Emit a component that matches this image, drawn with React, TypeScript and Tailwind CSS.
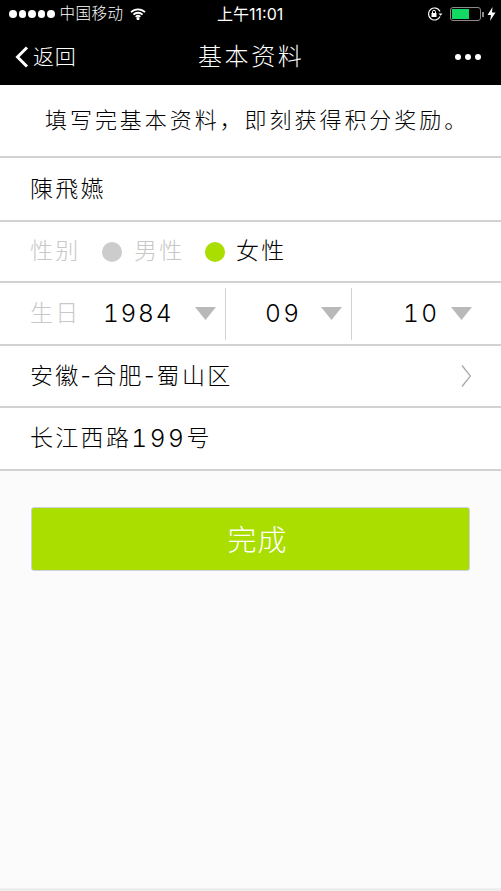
import { ReactNode } from "react";

const font = "font-['Inter','Noto_Sans_CJK_SC',sans-serif]";

function Row({ children, className = "" }: { children: ReactNode; className?: string }) {
  return (
    <div className={`flex items-center whitespace-nowrap border-b-2 border-[#d2d2d2] bg-white pl-[30px] pr-[29px] text-[23px] tracking-[2.3px] ${className}`}>
      {children}
    </div>
  );
}

function Caret() {
  return (
    <svg width="21" height="13" viewBox="0 0 21 13" className="shrink-0">
      <polygon points="0,0 21,0 10.5,13" fill="#b9b9b9" />
    </svg>
  );
}

function Dot({ color }: { color: string }) {
  return <span className={`h-5 w-5 rounded-full ${color}`} />;
}

function StatusBar() {
  return (
    <div className="relative flex h-7 items-center pl-[9px] pr-[5px] text-white">
      <div className="flex gap-[2px]">
        {[0, 1, 2, 3, 4].map((i) => (
          <span key={i} className="h-[7.5px] w-[7.5px] rounded-full bg-white" />
        ))}
      </div>
      <span className="ml-[5px] text-[15.5px] tracking-[0.5px]">中国移动</span>
      <svg width="16" height="12" viewBox="0 0 16 12" className="ml-[6px]" fill="none" stroke="white" strokeWidth="1.8">
        <path d="M1 4.2a10 10 0 0 1 14 0" />
        <path d="M3.4 6.6a6.6 6.6 0 0 1 9.2 0" />
        <path d="M5.7 8.8a3.3 3.3 0 0 1 4.6 0" />
        <circle cx="8" cy="10.6" r="0.7" fill="white" />
      </svg>
      <span className="absolute left-[217px] top-[4px] text-[16px] font-normal leading-5">上午11:01</span>
      <div className="ml-auto flex items-center">
        <svg width="17" height="14" viewBox="0 0 17 14" fill="none" stroke="white" strokeWidth="1.2">
          <path d="M13 9.5A6 6 0 1 1 13 4.5" />
          <path d="M11.5 6.5h4l-2 2.2z" fill="white" stroke="none" />
          <rect x="4.5" y="6" width="5" height="4" fill="white" stroke="none" />
          <path d="M5.5 6V4.8a1.5 1.5 0 0 1 3 0V6" strokeWidth="1" />
        </svg>
        <div className="ml-[6px] flex h-[14px] w-[31px] items-center rounded-[3px] border border-[#8a8a8a] p-[1px]">
          <div className="h-full w-[17px] bg-[#13d862]" />
        </div>
        <span className="ml-[1px] h-[5px] w-[2px] bg-[#8a8a8a]" />
        <svg width="9" height="14" viewBox="0 0 9 14" className="ml-[3px]">
          <polygon points="5.5,0 0.5,8 4,8 3,14 8.5,5.5 5,5.5" fill="white" />
        </svg>
      </div>
    </div>
  );
}

export default function App() {
  return (
    <div className={`flex h-[891px] w-[501px] flex-col overflow-hidden bg-[#fbfbfb] font-light text-black ${font}`}>
      <div className="h-[85px] shrink-0 bg-black">
        <StatusBar />
        <div className="relative flex h-[57px] items-center pl-[15px] pr-[20px] text-white">
          <svg width="14" height="22" viewBox="0 0 14 22" fill="none" stroke="white" strokeWidth="3">
            <path d="M12 1.5 2.5 11l9.5 9.5" />
          </svg>
          <span className="ml-[4px] text-[21px] tracking-[0.8px]">返回</span>
          <span className="absolute left-[198px] text-[24px] tracking-[2.6px]">基本资料</span>
          <div className="ml-auto flex gap-[4px]">
            <span className="h-[6px] w-[6px] rounded-full bg-white" />
            <span className="h-[6px] w-[6px] rounded-full bg-white" />
            <span className="h-[6px] w-[6px] rounded-full bg-white" />
          </div>
        </div>
      </div>

      <div className="flex h-[73px] shrink-0 items-center whitespace-nowrap border-b-2 border-[#d2d2d2] bg-white pl-[45px] text-[22px] tracking-[2.95px]">
        填写完基本资料，即刻获得积分奖励。
      </div>

      <Row className="h-[64px]">陳飛嬿</Row>

      <Row className="h-[61px]">
        <span className="w-[50px] shrink-0 text-[#c8c8c8]">性别</span>
        <span className="ml-[22px] flex"><Dot color="bg-[#cccccc]" /></span>
        <span className="ml-[12px] w-[50px] shrink-0 text-[#c8c8c8]">男性</span>
        <span className="ml-[21px] flex"><Dot color="bg-[#aadd00]" /></span>
        <span className="ml-[11px] shrink-0">女性</span>
      </Row>

      <Row className="h-[63px]">
        <span className="w-[50px] shrink-0 text-[#c8c8c8]">生日</span>
        <span className="ml-[23px] w-[71px] shrink-0 text-[24.5px] tabular-nums tracking-[1.7px]">1984</span>
        <span className="ml-[21px]"><Caret /></span>
        <span className="ml-[9px] h-[52px] w-px shrink-0 bg-[#d2d2d2]" />
        <span className="ml-[39px] w-[36px] shrink-0 text-[24.5px] tabular-nums tracking-[2.4px]">09</span>
        <span className="ml-[20px]"><Caret /></span>
        <span className="ml-[9px] h-[52px] w-px shrink-0 bg-[#d2d2d2]" />
        <span className="ml-[51px] w-[35px] shrink-0 text-[24.5px] tabular-nums tracking-[2.4px]">10</span>
        <span className="ml-[13px]"><Caret /></span>
      </Row>

      <Row className="h-[62px]">
        <span>安徽-合肥-蜀山区</span>
        <svg width="10" height="24" viewBox="0 0 10 24" fill="none" stroke="#a5a5a5" strokeWidth="1.2" className="ml-auto mr-[1px]">
          <path d="M1 1.5 9.5 12 1 22.5" />
        </svg>
      </Row>

      <Row className="h-[63px]">
        长江西路<span className="text-[24.5px] tabular-nums tracking-[2.6px]">199</span>号
      </Row>

      <div className="px-[31px] pt-[36px]">
        <button className="flex h-[64px] w-full items-center justify-center rounded-[3px] border border-[#cfcfe0] bg-[#aadd00] pl-[14px] pt-[3px] text-[29px] tracking-[1px] text-white">
          完成
        </button>
      </div>

      <div className="mt-auto h-[3px] border-t border-[#f0f0f0] bg-[#ececec]" />
    </div>
  );
}
